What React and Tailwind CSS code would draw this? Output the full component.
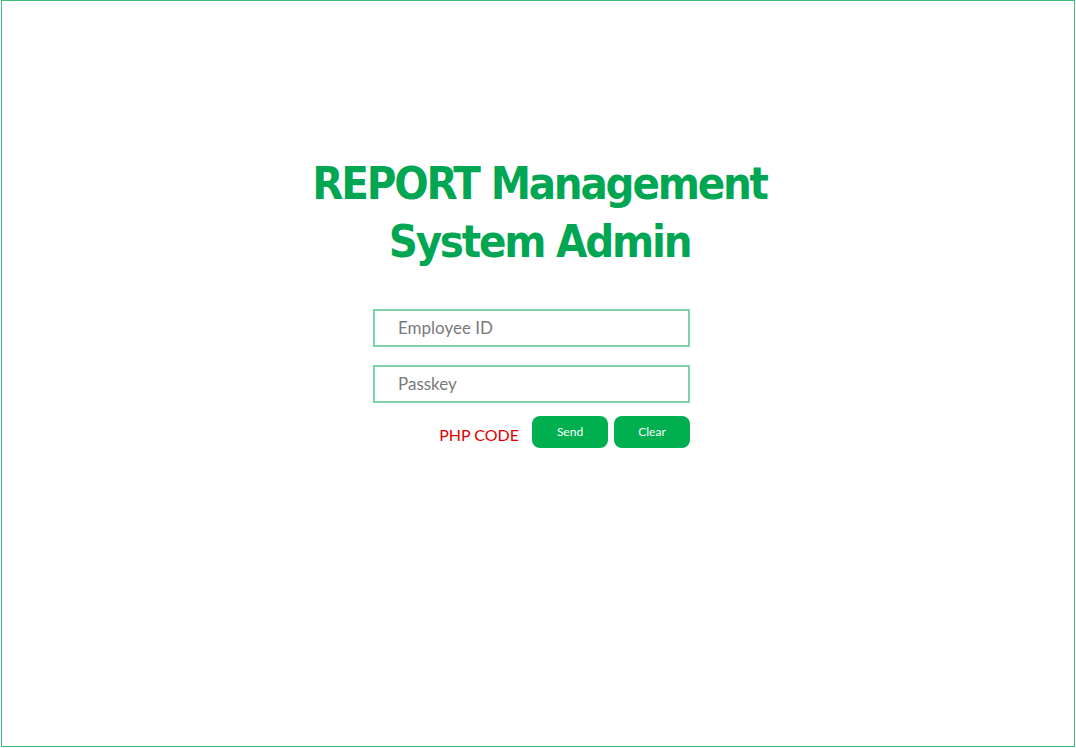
export default function App() {
  return (
    <div className="w-[1076px] h-[748px] bg-white">
      <div className="ml-[1px] w-[1074px] h-[747px] border border-[#3fba7c] flex flex-col items-center">
        <h1
          className="mt-[154px] ml-[3px] text-center text-[#00a651] font-bold text-[45px] leading-[58px] tracking-[-2.2px]"
          style={{ fontFamily: '"DejaVu Sans Condensed", "DejaVu Sans", sans-serif', fontStretch: "condensed" }}
        >
          REPORT Management
          <br />
          System Admin
        </h1>
        <div className="mt-[38px] mr-[13px] w-[317px] flex flex-col" style={{ fontFamily: 'Lato, "Open Sans", sans-serif' }}>
          <div className="h-[38px] border-2 border-[#7fd1a7] flex items-center pl-[23px] text-[17px] text-[#7a7a7a]">
            Employee ID
          </div>
          <div className="mt-[18px] h-[38px] border-2 border-[#7fd1a7] flex items-center pl-[23px] text-[17px] text-[#7a7a7a]">
            Passkey
          </div>
          <div className="mt-[13px] flex items-center justify-end">
            <span className="mt-[5px] mr-[13px] text-[16px] text-[#e00000]">PHP CODE</span>
            <button className="w-[76px] h-[32px] rounded-[8px] bg-[#00b050] text-white text-[12px]">Send</button>
            <button className="ml-[6px] w-[76px] h-[32px] rounded-[8px] bg-[#00b050] text-white text-[12px]">Clear</button>
          </div>
        </div>
      </div>
    </div>
  );
}
